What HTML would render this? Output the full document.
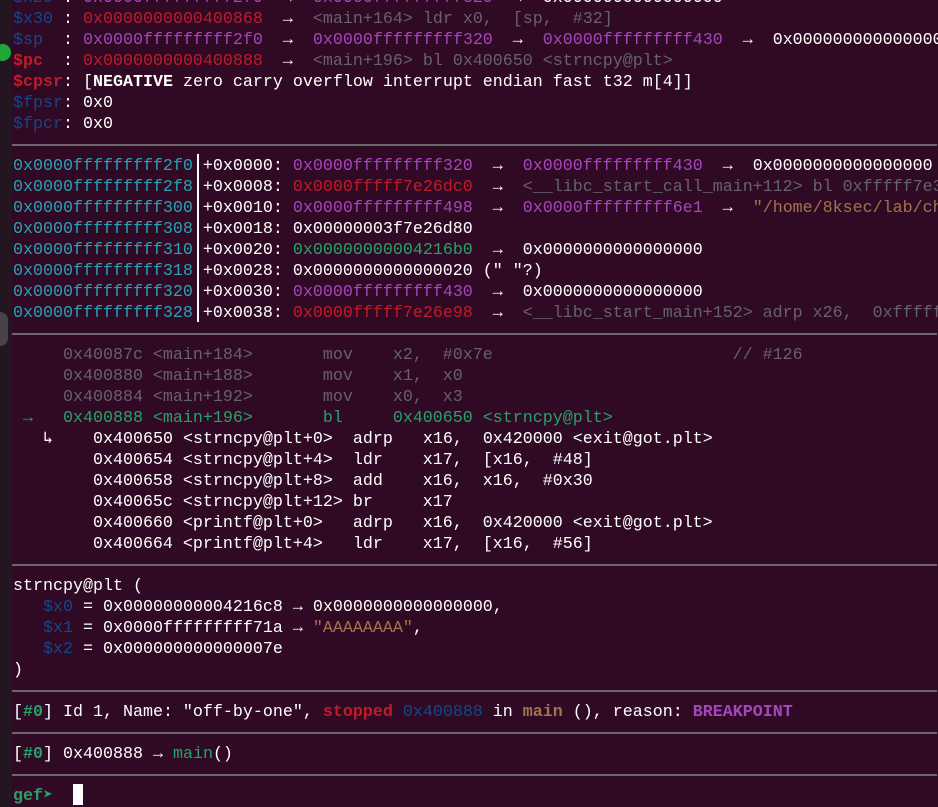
<!DOCTYPE html>
<html><head><meta charset="utf-8"><style>
html,body{margin:0;padding:0}
body{width:938px;height:807px;background:#300a24;overflow:hidden;position:relative;font-family:"Liberation Mono","DejaVu Sans Mono",monospace;font-size:16.67px;color:#fff}
#strip{position:absolute;left:0;top:0;width:12px;height:807px;background:#241620}
#dot{position:absolute;left:-6px;top:44px;width:17px;height:17px;border-radius:50%;background:#1fa83a}
#knob{position:absolute;left:0;top:312px;width:8px;height:34px;border-radius:0 8px 8px 0;background:#4a4248}
#t{position:absolute;left:13px;top:-12px;width:925px}
.l{height:21px;line-height:21px;white-space:pre}
.s{height:21px;position:relative;left:-1px}
.s:after{content:"";position:absolute;left:0;right:0;top:9px;height:2px;background:#6a666a}
.r{color:#c01c28}.m{color:#a347ba}.g{color:#66626a}.b{color:#12488b}.c{color:#2aa1b3}.gr{color:#26a269}.y{color:#a2734c}
.B{font-weight:bold}
.bar{position:absolute;left:197px;top:154px;width:2px;height:168px;background:#fff}
#cur{position:absolute;left:73px;top:784px;width:10px;height:21px;background:#fff}
</style></head><body>
<div id="strip"></div><div id="dot"></div><div id="knob"></div>
<div id="t">
<div class="l"><span class="b">$x29</span> : <span class="m">0x0000fffffffff2f0</span>  →  <span class="m">0x0000fffffffff320</span>  →  0x0000000000000000</div>
<div class="l"><span class="b">$x30</span> : <span class="r">0x0000000000400868</span>  →  <span class="g">&lt;main+164&gt; ldr x0,  [sp,  #32]</span></div>
<div class="l"><span class="b">$sp </span> : <span class="m">0x0000fffffffff2f0</span>  →  <span class="m">0x0000fffffffff320</span>  →  <span class="m">0x0000fffffffff430</span>  →  0x0000000000000000</div>
<div class="l"><span class="r B">$pc </span> : <span class="r">0x0000000000400888</span>  →  <span class="g">&lt;main+196&gt; bl 0x400650 &lt;strncpy@plt&gt;</span></div>
<div class="l"><span class="r B">$cpsr</span>: [<span class="B">NEGATIVE</span> zero carry overflow interrupt endian fast t32 m[4]]</div>
<div class="l"><span class="b">$fpsr</span>: 0x0</div>
<div class="l"><span class="b">$fpcr</span>: 0x0</div>
<div class="s"></div>
<div class="l"><span class="c">0x0000fffffffff2f0</span> +0x0000: <span class="m">0x0000fffffffff320</span>  →  <span class="m">0x0000fffffffff430</span>  →  0x0000000000000000</div>
<div class="l"><span class="c">0x0000fffffffff2f8</span> +0x0008: <span class="r">0x0000fffff7e26dc0</span>  →  <span class="g">&lt;__libc_start_call_main+112&gt; bl 0xfffff7e3</span></div>
<div class="l"><span class="c">0x0000fffffffff300</span> +0x0010: <span class="m">0x0000fffffffff498</span>  →  <span class="m">0x0000fffffffff6e1</span>  →  <span class="y">"/home/8ksec/lab/ch</span></div>
<div class="l"><span class="c">0x0000fffffffff308</span> +0x0018: 0x00000003f7e26d80</div>
<div class="l"><span class="c">0x0000fffffffff310</span> +0x0020: <span class="gr">0x00000000004216b0</span>  →  0x0000000000000000</div>
<div class="l"><span class="c">0x0000fffffffff318</span> +0x0028: 0x0000000000000020 (" "?)</div>
<div class="l"><span class="c">0x0000fffffffff320</span> +0x0030: <span class="m">0x0000fffffffff430</span>  →  0x0000000000000000</div>
<div class="l"><span class="c">0x0000fffffffff328</span> +0x0038: <span class="r">0x0000fffff7e26e98</span>  →  <span class="g">&lt;__libc_start_main+152&gt; adrp x26,  0xfffff</span></div>
<div class="s"></div>
<div class="l g">     0x40087c &lt;main+184&gt;       mov    x2,  #0x7e                        // #126</div>
<div class="l g">     0x400880 &lt;main+188&gt;       mov    x1,  x0</div>
<div class="l g">     0x400884 &lt;main+192&gt;       mov    x0,  x3</div>
<div class="l gr"> →   0x400888 &lt;main+196&gt;       bl     0x400650 &lt;strncpy@plt&gt;</div>
<div class="l">   ↳    0x400650 &lt;strncpy@plt+0&gt;  adrp   x16,  0x420000 &lt;exit@got.plt&gt;</div>
<div class="l">        0x400654 &lt;strncpy@plt+4&gt;  ldr    x17,  [x16,  #48]</div>
<div class="l">        0x400658 &lt;strncpy@plt+8&gt;  add    x16,  x16,  #0x30</div>
<div class="l">        0x40065c &lt;strncpy@plt+12&gt; br     x17</div>
<div class="l">        0x400660 &lt;printf@plt+0&gt;   adrp   x16,  0x420000 &lt;exit@got.plt&gt;</div>
<div class="l">        0x400664 &lt;printf@plt+4&gt;   ldr    x17,  [x16,  #56]</div>
<div class="s"></div>
<div class="l">strncpy@plt (</div>
<div class="l">   <span class="b">$x0</span> = 0x00000000004216c8 → 0x0000000000000000,</div>
<div class="l">   <span class="b">$x1</span> = 0x0000fffffffff71a → <span class="y">"AAAAAAAA"</span>,</div>
<div class="l">   <span class="b">$x2</span> = 0x000000000000007e</div>
<div class="l">)</div>
<div class="s"></div>
<div class="l">[<span class="gr B">#0</span>] Id 1, Name: "off-by-one", <span class="r B">stopped</span> <span class="b">0x400888</span> in <span class="y B">main</span> (), reason: <span class="m B">BREAKPOINT</span></div>
<div class="s"></div>
<div class="l">[<span class="gr B">#0</span>] 0x400888 → <span class="gr">main</span>()</div>
<div class="s"></div>
<div class="l"><span class="gr B">gef➤</span>  </div>
</div>
<div class="bar"></div>
<div id="cur"></div>
</body></html>
